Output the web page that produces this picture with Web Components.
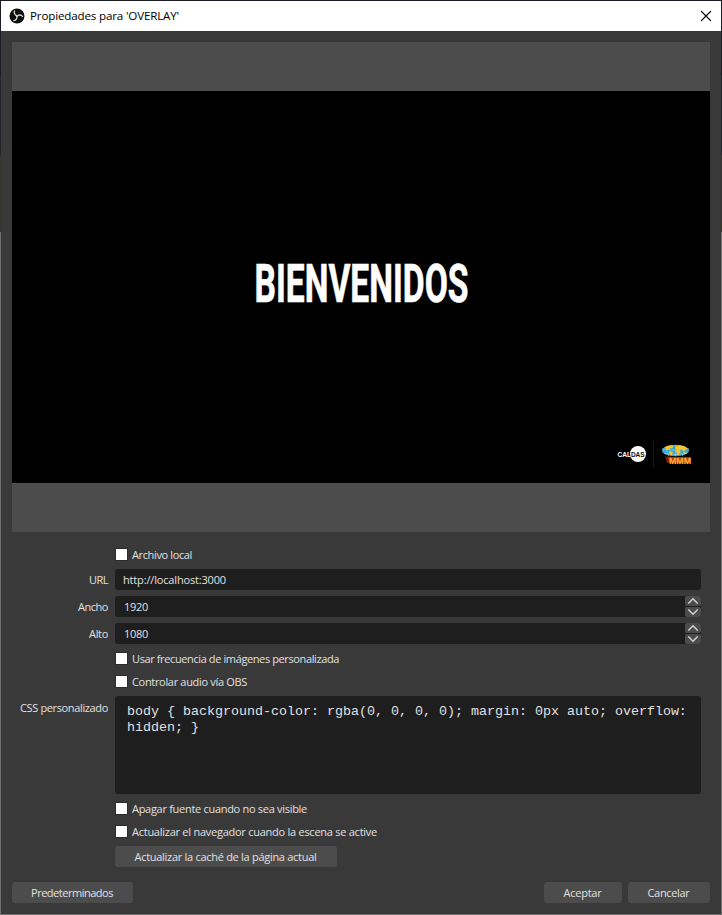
<!DOCTYPE html>
<html lang="es">
<head>
<meta charset="utf-8">
<title>Propiedades para 'OVERLAY'</title>
<style>
html, body { margin: 0; height: 915px; overflow: hidden; }
body { font: 11px/17px "Open Sans", "Noto Sans", sans-serif; color: #e1e0e1;
  background: linear-gradient(#1c1d24 0 75px, #20262c 75px 155px, #35362d 155px 232px, #707070 232px); }
</style>
</head>
<body>
<props-dialog></props-dialog>
<script>
const define = (name, html, setup) => customElements.define(name, class extends HTMLElement {
  constructor() {
    super();
    this.attachShadow({ mode: 'open' }).innerHTML = html;
  }
  connectedCallback() { if (setup) setup(this, this.shadowRoot); }
});

/* One line of text whose tracking is adjusted to fill the given width. */
define('fit-text', `<style>:host{display:inline-block;white-space:pre}span{display:inline-block}</style><span><slot></slot></span>`,
  (el, root) => {
    const span = root.querySelector('span');
    const w = +el.getAttribute('width');
    const n = el.textContent.length;
    span.style.letterSpacing = '0px';
    const natural = span.getBoundingClientRect().width;
    const ls = (w - natural) / n;
    span.style.letterSpacing = ls + 'px';
    el.style.width = w + 'px';
  });

define('obs-logo', `<style>:host{display:block;width:16px;height:16px}svg{display:block}</style>
<svg width="16" height="16" viewBox="0 0 16 16"><circle cx="8" cy="8" r="7.500" fill="#0c0c0c"/>
<g fill="none" stroke="#d8d8d8" stroke-width="1.300" stroke-linecap="round">
<path d="M8.300 8C6.100 7.400 4.700 5.400 5.500 3"/>
<path d="M8.300 8C6.100 7.400 4.700 5.400 5.500 3" transform="rotate(120 8 8)"/>
<path d="M8.300 8C6.100 7.400 4.700 5.400 5.500 3" transform="rotate(240 8 8)"/></g></svg>`);

define('title-bar', `<style>
:host{display:flex;align-items:center;height:30px;background:#fff;color:#000;font-size:11.6px;padding:0 9px 1px 8px;box-sizing:border-box}
.t{margin-left:5px;flex:1}
svg{display:block}</style>
<obs-logo></obs-logo><div class="t"><slot></slot></div>
<svg width="12" height="12" viewBox="0 0 12 12"><path d="M1 1l10 10M11 1L1 11" stroke="#000" stroke-width="1.100"/></svg>`);

define('source-preview', `<style>
:host{display:flex;align-items:center;height:490px;background:#4c4c4c}
svg{display:block;width:698px;height:392px;background:#000}
text{fill:#fff}</style>
<svg viewBox="12 91 698 392">
<text x="254.500" y="301.800" font-family="Roboto, sans-serif" font-weight="700" font-size="53.500" textLength="214" lengthAdjust="spacingAndGlyphs" stroke="#fff" stroke-width=".700">BIENVENIDOS</text>
<circle cx="638" cy="454" r="8" fill="#fff"/>
<text x="617.500" y="457" font-family="Liberation Sans" font-weight="700" font-size="8" textLength="27.200" lengthAdjust="spacingAndGlyphs">CAL<tspan fill="#111">DAS</tspan></text>
<path d="M653.500 440v28" stroke="#151515"/>
<ellipse cx="675.500" cy="450.500" rx="13.500" ry="5.800" fill="#36a9d4"/>
<path d="M662 449q13 3 27 0M664 453.500q12 2 23 0M675.500 445v11M668 446q-3 5 1 10M683 446q3 5-1 10" fill="none" stroke="#8fdbed" stroke-width=".600"/>
<path d="M664.500 447.500l3-1.800 6-.5-1 2.500-3 1-1.500 1.300-2-1zM669 451l4 1-1.500 3.500-1.500-.5zM676 446l4-.8 5 1.300 2.500 2.500-2.500.7-1 1.500-3-2-2 1-3-.8zM676 450l4 .3.500 2-2 3-1.500-.5zM684 452.500l2.500-.5-.5 1.800-2 .5z" fill="#f8c531"/>
<path d="M665 456.500h6v6.500h-4z" fill="#7a1d08"/><path d="M668 457h23v5.500l-2 1h-19z" fill="#b83512"/>
<text x="669" y="463.500" font-family="Liberation Sans" font-weight="700" font-size="9.200" textLength="22" lengthAdjust="spacingAndGlyphs" style="fill:#ffb32c">MMM</text>
</svg>`);

define('form-row', `<style>
:host{display:grid;grid-template-columns:96px 586px;column-gap:7px}
.l{text-align:right;line-height:21px}
:host([top]) .l{line-height:23px}
.c{min-width:0}
fit-text{text-align:left}</style><div class="l"></div><div class="c"><slot></slot></div>`,
  (el, root) => {
    if (el.hasAttribute('label'))
      root.querySelector('.l').innerHTML = `<fit-text width="${el.getAttribute('w')}">${el.getAttribute('label')}</fit-text>`;
  });

define('check-box', `<style>
:host{display:flex;align-items:center;height:17px}
i{width:11px;height:11px;background:#fff;margin:0 5px 0 1px;outline:1px solid #2d2c2d}</style><i></i><slot></slot>`);

define('text-field', `<style>
:host{display:flex;align-items:center;height:21px;box-sizing:border-box;padding-left:8px;border-radius:3px;background:#1f1e1f}</style><slot></slot>`);

define('spin-box', `<style>
:host{display:flex;height:21px;border-radius:3px;background:#1f1e1f;line-height:21px;overflow:hidden}
.v{flex:1;padding-left:9px}
.b{display:grid;grid-template-rows:10px 10px;row-gap:1px;width:16px}
.b span{background:#4c4c4c;border-radius:2px}svg{display:block}</style>
<div class="v"><slot></slot></div><div class="b">
<span><svg width="16" height="10"><path d="M3.300 7.500L8 2.800l4.700 4.700" fill="none" stroke="#d2d2d2" stroke-width="1.500"/></svg></span>
<span><svg width="16" height="10"><path d="M3.300 2.500L8 7.200l4.700-4.700" fill="none" stroke="#d2d2d2" stroke-width="1.500"/></svg></span></div>`);

define('code-area', `<style>
:host{display:block;height:98px;box-sizing:border-box;padding:8px 0 0 12px;border-radius:3px;background:#1f1e1f;
font:13.34px/16px "Liberation Mono",monospace;white-space:pre}</style><slot></slot>`);

define('push-button', `<style>
:host{display:flex;align-items:center;justify-content:center;height:21px;box-sizing:border-box;padding-right:1px;border-radius:3px;background:#4c4c4c}</style><slot></slot>`);

define('props-dialog', `<style>
:host{display:flex;flex-direction:column;box-sizing:border-box;width:720px;height:913px;margin:1px;background:#3a393a}
main{padding:11px 11px 0}
.form{display:flex;flex-direction:column;gap:6px;padding:14px 0 15px}
.foot{display:flex;gap:6px}.sp{flex:1}</style>
<title-bar><fit-text width="149">Propiedades para 'OVERLAY'</fit-text></title-bar>
<main><source-preview></source-preview>
<div class="form">
<form-row><check-box><fit-text width="60">Archivo local</fit-text></check-box></form-row>
<form-row label="URL" w="19"><text-field><fit-text width="103">http://localhost:3000</fit-text></text-field></form-row>
<form-row label="Ancho" w="30"><spin-box><fit-text width="24">1920</fit-text></spin-box></form-row>
<form-row label="Alto" w="19"><spin-box><fit-text width="24">1080</fit-text></spin-box></form-row>
<form-row><check-box><fit-text width="207">Usar frecuencia de imágenes personalizada</fit-text></check-box></form-row>
<form-row><check-box><fit-text width="115">Controlar audio vía OBS</fit-text></check-box></form-row>
<form-row top label="CSS personalizado" w="88"><code-area>body { background-color: rgba(0, 0, 0, 0); margin: 0px auto; overflow:
hidden; }</code-area></form-row>
<form-row><check-box><fit-text width="175">Apagar fuente cuando no sea visible</fit-text></check-box></form-row>
<form-row><check-box><fit-text width="245">Actualizar el navegador cuando la escena se active</fit-text></check-box></form-row>
<form-row><push-button style="width:222px"><fit-text width="182">Actualizar la caché de la página actual</fit-text></push-button></form-row>
</div>
<div class="foot"><push-button style="width:121px"><fit-text width="82">Predeterminados</fit-text></push-button><div class="sp"></div>
<push-button style="width:78px"><fit-text width="38">Aceptar</fit-text></push-button>
<push-button style="width:82px"><fit-text width="42">Cancelar</fit-text></push-button></div>
</main>`);
</script>
</body>
</html>
